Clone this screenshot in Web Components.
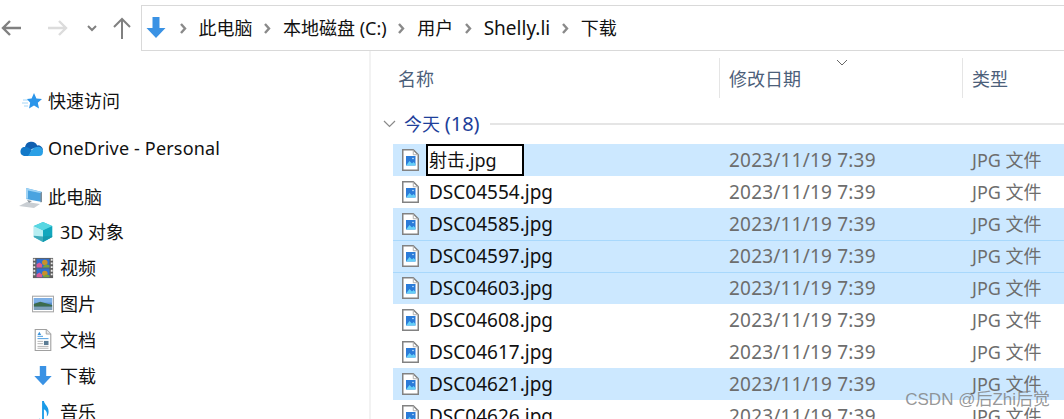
<!DOCTYPE html>
<html>
<head>
<meta charset="utf-8">
<title>下载</title>
<style>
  html, body { margin: 0; height: 100%; background: #fff; overflow: hidden; }
  body { font: 18px/24px "Noto Sans", "Noto Sans CJK SC", sans-serif; color: #111; }
</style>
</head>
<body>

<explorer-window>
  <nav-toolbar slot="toolbar">
    <path-crumb>此电脑</path-crumb>
    <path-crumb>本地磁盘 (C:)</path-crumb>
    <path-crumb>用户</path-crumb>
    <path-crumb style="font-size:19px">Shelly.li</path-crumb>
    <path-crumb>下载</path-crumb>
  </nav-toolbar>

  <nav-pane slot="nav">
    <nav-item icon="star" top="32">快速访问</nav-item>
    <nav-item icon="cloud" top="11" style="letter-spacing:.17px">OneDrive - Personal</nav-item>
    <nav-item icon="pc" top="13">此电脑</nav-item>
    <nav-item icon="cube" top="-1" indent>3D 对象</nav-item>
    <nav-item icon="film" indent>视频</nav-item>
    <nav-item icon="photo" indent>图片</nav-item>
    <nav-item icon="doc" indent>文档</nav-item>
    <nav-item icon="down" indent>下载</nav-item>
    <nav-item icon="music" indent>音乐</nav-item>
  </nav-pane>

  <file-list slot="files">
    <file-row selected renaming date="2023/11/19 7:39" kind="JPG 文件">射击.jpg</file-row>
    <file-row date="2023/11/19 7:39" kind="JPG 文件">DSC04554.jpg</file-row>
    <file-row selected date="2023/11/19 7:39" kind="JPG 文件">DSC04585.jpg</file-row>
    <file-row selected joined date="2023/11/19 7:39" kind="JPG 文件">DSC04597.jpg</file-row>
    <file-row selected joined date="2023/11/19 7:39" kind="JPG 文件">DSC04603.jpg</file-row>
    <file-row date="2023/11/19 7:39" kind="JPG 文件">DSC04608.jpg</file-row>
    <file-row date="2023/11/19 7:39" kind="JPG 文件">DSC04617.jpg</file-row>
    <file-row selected date="2023/11/19 7:39" kind="JPG 文件">DSC04621.jpg</file-row>
    <file-row date="2023/11/19 7:39" kind="JPG 文件">DSC04626.jpg</file-row>
  </file-list>

  <water-mark slot="mark">CSDN @后Zhi后觉</water-mark>
</explorer-window>

<script>
// icons for the navigation pane, all in a 24x24 box
const NAV_ICONS = {
  star: `<path d="M4 11h7M3 14h6M5 17h4" stroke="#a5d6f7" stroke-width="1"/>
         <path d="M15 4l2.400 5.400 5.600.6-4.200 3.800 1.200 5.700-5-3-5 3 1.200-5.700L8 10l4.600-.6z" fill="#2b95ea"/>`,
  cloud: `<path d="M6 11a6.500 6.500 0 0 1 12.200-1.600A5 5 0 0 1 24 14l-9-2-6 3-7-1a4 4 0 0 1 4-3z" fill="#0f5fb0"/>
          <path d="M5 20a4.500 4.500 0 0 1 0-8.800a6 6 0 0 1 5 .8l3 2-3 6z" fill="#1279c9"/>
          <path d="M9 20l5-7.500a5 5 0 0 1 4-1.500 4.500 4.500 0 0 1 6 4.500q0 4.500-4 4.500z" fill="#2aa0e6"/>`,
  pc: `<path d="M7 3l16 4v10L7 14z" fill="#4aa3e0"/><path d="M7 3l16 4-2 1-12-2.500v8L7 14z" fill="#9fd3f5"/>
       <path d="M23 7v10l-1.500.5V8z" fill="#7f8d99"/>
       <path d="M0 21l8-4 13 2-6 4z" fill="#c9ced3"/><path d="M8 15l5 1-3 2z" fill="#8f979e"/>`,
  cube: `<path d="M12 1l10 4.500v12L12 23 2 17.500v-12z" fill="#2fc4d6"/>
         <path d="M2 5.500L12 10v13L2 17.500z" fill="#b6eef2"/>
         <path d="M12 10l10-4.500v12L12 23z" fill="#12a7bd"/>
         <path d="M12 1l10 4.500L12 10 2 5.500z" fill="#58d7e2"/>
         <path d="M2 16l10 1 10-1v1.500L12 23 2 17.500z" fill="#1794a8" opacity=".75"/>`,
  film: `<rect x="1" y="1" width="22" height="22" fill="#5f5f5f"/>
         <rect x="5" y="2" width="14" height="9.500" fill="#2f6fd0"/><rect x="5" y="12.500" width="14" height="9.500" fill="#2f6fd0"/>
         <path d="M5 8l3-2 3 2v3.500H5z" fill="#d85a9a"/><circle cx="14" cy="6" r="3" fill="#c9902c"/><path d="M11 11.500h8V9l-4-1z" fill="#7ba23a"/>
         <path d="M5 19l3-2 3 2v3H5z" fill="#d85a9a"/><circle cx="14" cy="18" r="3" fill="#c9902c"/><path d="M11 22h8v-2l-4-1z" fill="#7ba23a"/>
         <path d="M2.500 2v20M21.500 2v20" stroke="#ececec" stroke-width="2" stroke-dasharray="2 2"/>`,
  photo: `<rect x=".5" y="3.500" width="23" height="17" fill="#fff" stroke="#a8a8a8" stroke-width="1.200"/>
          <rect x="2" y="5.500" width="20" height="13" fill="#5a8fd0"/><path d="M2 5.500h20v5H2z" fill="#7eb0e6"/>
          <path d="M2 12l7-2.500 13 3.500v2H2z" fill="#3c6b4c"/><path d="M2 15h20v3.500H2z" fill="#7d9fb8"/>`,
  doc: `<path d="M3.500 .5h12l5 5v18h-17z" fill="#fff" stroke="#a0a0a0" stroke-width="1.200"/><path d="M15.500 .5v5h5" fill="#e8e8e8" stroke="#a0a0a0"/>
        <path d="M6 8h6M6 10.500h12" stroke="#3d94dc"/><path d="M6 13.500h6M6 16h6M6 19h12M6 21h12" stroke="#b0b0b0"/>
        <path d="M6 6.500l2-3.500 2 3.500z" fill="#3d94dc"/><rect x="13" y="13" width="5" height="4.500" fill="#5b7c94"/>`,
  down: `<path d="M8.500 1h7v11h6L12 22 2.500 12h6z" fill="#3a92e4"/>`,
  music: `<path d="M11 0h2c.5 4 6 6 5 13-.3 2-1 3-2 4 .6-3 .6-6-3-8v12c0 2.500-3 4-6 3-3-1-1-5 2-4.500l2 .5z" fill="#1a9be8"/>`
};

class NavItem extends HTMLElement {
  connectedCallback() {
    const icon = NAV_ICONS[this.getAttribute("icon")] || "";
    const top = this.getAttribute("top") || 0;
    this.attachShadow({ mode: "open" }).innerHTML = `
      <style>
        :host { display: flex; align-items: center; gap: 5px; height: 36px; padding-left: 19px; margin-top: ${top}px; }
        :host([indent]) { padding-left: 32px; gap: 6px; }
        svg { width: 24px; height: 24px; flex: none; }
        :host([indent]) svg { width: 22px; height: 22px; }
      </style>
      <svg viewBox="0 0 24 24">${icon}</svg><span><slot></slot></span>`;
  }
}
customElements.define("nav-item", NavItem);

class NavPane extends HTMLElement {
  constructor() {
    super();
    this.attachShadow({ mode: "open" }).innerHTML = `
      <style>
        :host { display: block; border-right: 2px solid #f2f2f2; overflow: hidden; }
      </style>
      <slot></slot>`;
  }
}
customElements.define("nav-pane", NavPane);

class PathCrumb extends HTMLElement {
  constructor() {
    super();
    this.attachShadow({ mode: "open" }).innerHTML = `
      <style>
        :host { display: flex; align-items: center; gap: 11px; white-space: nowrap; }
        svg { width: 9px; height: 11px; flex: none; }
      </style>
      <svg viewBox="0 0 9 11"><path d="M2 1l4 4.500L2 10" fill="none" stroke="#8a8a8a" stroke-width="2.400"/></svg>
      <span><slot></slot></span>`;
  }
}
customElements.define("path-crumb", PathCrumb);

class NavToolbar extends HTMLElement {
  constructor() {
    super();
    this.attachShadow({ mode: "open" }).innerHTML = `
      <style>
        :host { display: flex; align-items: center; height: 51px; box-sizing: border-box; padding-top: 5px; }
        .buttons { display: flex; align-items: center; width: 141px; flex: none; height: 46px; }
        .buttons svg { flex: none; }
        .bar { flex: 1; height: 46px; box-sizing: border-box; border: 1px solid #d9d9d9; border-right: 0;
               display: flex; align-items: center; gap: 10.500px; padding-left: 2px; }
        .bar > svg { width: 24px; height: 24px; flex: none; }
      </style>
      <div class="buttons">
        <svg width="24" height="20" viewBox="0 0 24 20"><path d="M21 10H3M10 3l-7 7 7 7" fill="none" stroke="#808080" stroke-width="2.400"/></svg>
        <svg width="24" height="20" viewBox="0 0 24 20" style="margin-left:22px"><path d="M2 10h18M13 3l7 7-7 7" fill="none" stroke="#dcdcdc" stroke-width="2.400"/></svg>
        <svg width="12" height="8" viewBox="0 0 12 8" style="margin-left:16px"><path d="M2 2l4 4 4-4" fill="none" stroke="#808080" stroke-width="2"/></svg>
        <svg width="20" height="24" viewBox="0 0 20 24" style="margin-left:14px"><path d="M10 23V3M2 11l8-8 8 8" fill="none" stroke="#808080" stroke-width="2"/></svg>
      </div>
      <div class="bar">
        <svg viewBox="0 0 24 24">${NAV_ICONS.down}</svg>
        <slot></slot>
      </div>`;
  }
}
customElements.define("nav-toolbar", NavToolbar);

class FileRow extends HTMLElement {
  connectedCallback() {
    const renaming = this.hasAttribute("renaming");
    this.attachShadow({ mode: "open" }).innerHTML = `
      <style>
        :host { display: grid; grid-template-columns: 336px 243px 1fr; align-items: center; height: 32px;
                white-space: nowrap; box-sizing: border-box; }
        :host([selected]) { background: #cce8ff; }
        :host([joined]) { box-shadow: inset 0 1px 0 #a8d8fc; }
        .name { display: flex; align-items: center; padding-left: 9px; font-size: 19px; color: #111; }
        svg { width: 17px; height: 22px; flex: none; margin-right: 10px; }
        .edit { box-sizing: border-box; width: 98px; height: 32px; margin-left: -3px; border: 2px solid #000;
                background: #fff; padding-left: 1px; line-height: 28px; font-size: 18px; }
        .date { color: #6d6d6d; font-size: 19px; letter-spacing: .2px; }
        .kind { color: #6d6d6d; }
      </style>
      <div class="name">
        <svg viewBox="0 0 17 22">
          <path d="M.75 .75h10.500l5 5v15.500H.75z" fill="#fff" stroke="#828282" stroke-width="1.500"/>
          <path d="M11.250 .75v5h5" fill="none" stroke="#b0b0b0"/>
          <rect x="4" y="7" width="9.500" height="9.500" fill="#2b7bd8"/>
          <path d="M4 16.500l3.500-4.500 2.500 2.500 1.500-1.500 2 2v1.500z" fill="#66d0f7"/>
          <circle cx="11" cy="9.500" r=".8" fill="#cfeaff"/>
        </svg>
        ${renaming ? `<span class="edit"><slot></slot></span>` : `<span><slot></slot></span>`}
      </div>
      <div class="date">${this.getAttribute("date")}</div>
      <div class="kind">${this.getAttribute("kind")}</div>`;
  }
}
customElements.define("file-row", FileRow);

class FileList extends HTMLElement {
  constructor() {
    super();
    this.attachShadow({ mode: "open" }).innerHTML = `
      <style>
        :host { display: block; overflow: hidden; padding-left: 22px; }
        .head { display: grid; grid-template-columns: 326px 243px 1fr; height: 40px; margin-top: 7px; color: #4c607a; }
        .col { position: relative; display: flex; align-items: center; padding: 2px 0 0 9px; }
        .col:first-child { padding-left: 5px; }
        .col + .col { border-left: 1px solid #e5e5e5; }
        .sort { position: absolute; left: 116px; top: 1px; }
        .group { display: flex; align-items: center; height: 32px; margin: 10px 0 4px -10px; color: #1e3f9a; }
        .group svg { flex: none; margin-right: 8px; }
        .group .count { font-size: 20px; }
        .group hr { flex: 1; height: 2px; border: 0; background: #e5e5e5; margin: 0 0 0 10px; }
      </style>
      <div class="head">
        <div class="col">名称</div>
        <div class="col">修改日期
          <svg class="sort" width="12" height="7" viewBox="0 0 12 7"><path d="M1 1l5 5 5-5" fill="none" stroke="#666" stroke-width="1"/></svg>
        </div>
        <div class="col">类型</div>
      </div>
      <div class="group">
        <svg width="13" height="8" viewBox="0 0 13 8"><path d="M1 1l5.500 5.500L12 1" fill="none" stroke="#8a8a8a" stroke-width="1.200"/></svg>
        <span>今天 <span class="count">(18)</span></span><hr>
      </div>
      <slot></slot>`;
  }
}
customElements.define("file-list", FileList);

class WaterMark extends HTMLElement {
  constructor() {
    super();
    this.attachShadow({ mode: "open" }).innerHTML = `
      <style>
        :host { position: absolute; right: 14px; bottom: 4px; height: 30px;
                font: 17px/30px "Liberation Sans", "Noto Sans CJK SC", sans-serif;
                color: rgba(125,125,125,.8); white-space: nowrap; }
      </style>
      <slot></slot>`;
  }
}
customElements.define("water-mark", WaterMark);

class ExplorerWindow extends HTMLElement {
  constructor() {
    super();
    this.attachShadow({ mode: "open" }).innerHTML = `
      <style>
        :host { display: grid; grid-template-columns: 371px 1fr; grid-template-rows: 51px 1fr; height: 419px; width: 1064px;
                position: relative; overflow: hidden; }
        .top { grid-column: 1 / 3; }
      </style>
      <div class="top"><slot name="toolbar"></slot></div>
      <slot name="nav"></slot>
      <slot name="files"></slot>
      <slot name="mark"></slot>`;
  }
}
customElements.define("explorer-window", ExplorerWindow);
</script>
</body>
</html>
